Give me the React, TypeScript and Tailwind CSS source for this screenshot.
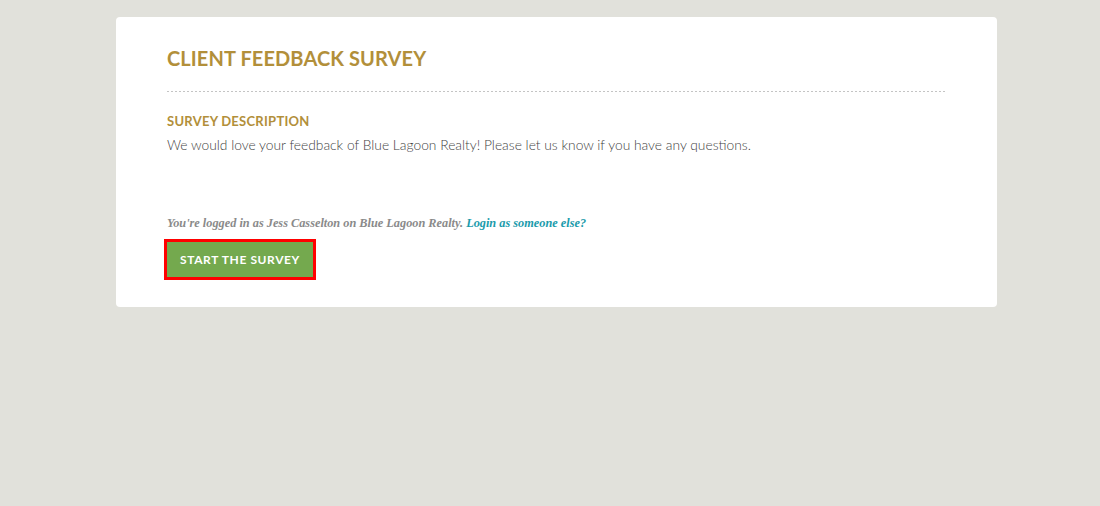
export default function App() {
  return (
    <div className="min-h-[506px] w-full bg-[#e1e1db] pt-[17px] font-['Lato',sans-serif]">
      <div className="ml-[116px] w-[881px] h-[290px] rounded-[4px] bg-white pl-[51px] pr-[50px] pt-[28px]">
        <h1 className="text-[20px] leading-[26px] font-bold tracking-[0.005em] text-[#b28f3a]">
          CLIENT FEEDBACK SURVEY
        </h1>
        <div className="mt-[20px] h-px bg-[repeating-linear-gradient(to_right,#c4c4c4_0_2px,transparent_2px_4px)]" />
        <h2 className="mt-[21px] text-[13px] leading-[16px] font-bold tracking-[0.02em] text-[#b28f3a]">
          SURVEY DESCRIPTION
        </h2>
        <p className="mt-[6px] text-[13.8px] leading-[20px] font-light text-[#3f3f3f]">
          We would love your feedback of Blue Lagoon Realty! Please let us know if you have any questions.
        </p>
        <p className="mt-[61px] font-['Liberation_Serif',serif] text-[12.3px] leading-[14px] italic font-bold text-[#8a8a8a]">
          You're logged in as Jess Casselton on Blue Lagoon Realty.{' '}
          <a href="#" className="text-[#1b9bab]">Login as someone else?</a>
        </p>
        <button className="mt-[9px] -ml-[3px] h-[41px] border-[3px] border-[#ff0000] bg-[#74a94e] px-[13px] text-[12px] font-bold tracking-[0.05em] text-white">
          START THE SURVEY
        </button>
      </div>
    </div>
  )
}
